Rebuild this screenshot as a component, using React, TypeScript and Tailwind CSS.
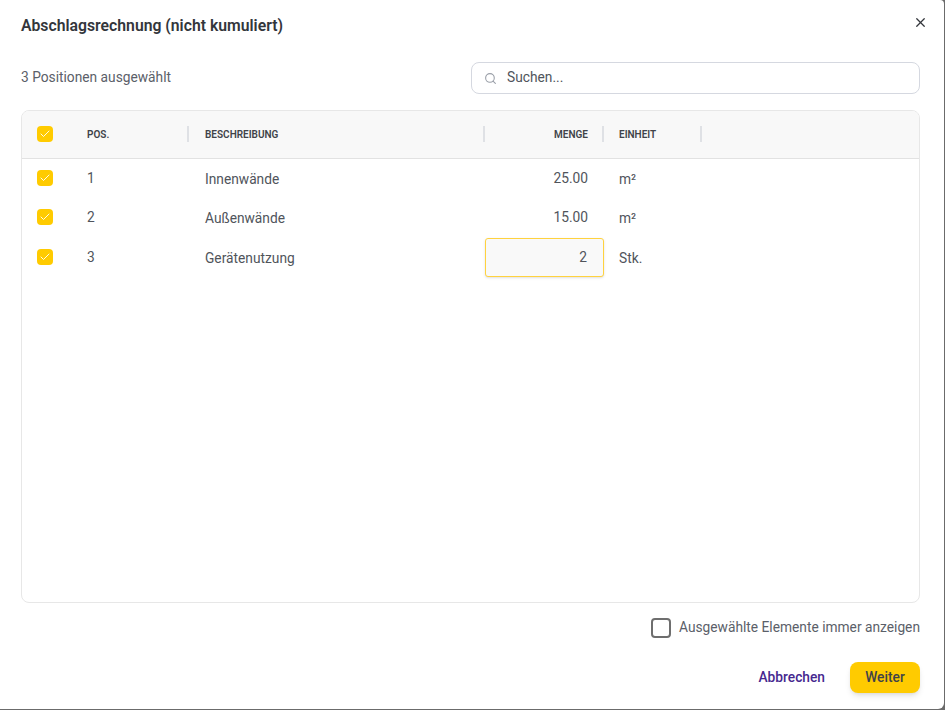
import React from 'react';
import { Check, Search, X } from 'lucide-react';

const CheckBox: React.FC = () => (
    <div className="w-4 h-4 rounded-[4px] bg-[#ffcb00] flex items-center justify-center">
        <Check size={12} strokeWidth={2} className="text-white/90" />
    </div>
);

const HeaderCell: React.FC<{ label: string; className: string; right?: boolean }> = ({ label, className, right }) => (
    <div className={`relative h-full flex items-center px-4 text-[10px] font-semibold text-[#3f4349] ${right ? 'justify-end' : ''} ${className}`}>
        {label}
        <div className="absolute right-0 top-[15px] w-0.5 h-4 bg-[#dfe1e5]" />
    </div>
);

const rows = [
    { pos: '1', name: 'Innenwände', qty: '25.00', unit: 'm²' },
    { pos: '2', name: 'Außenwände', qty: '15.00', unit: 'm²' },
    { pos: '3', name: 'Gerätenutzung', qty: '2', unit: 'Stk.', editing: true },
];

export default function App() {
    return (
        <div className="w-[945px] h-[710px] bg-[#6b6b6b] font-['Roboto',sans-serif]">
            <div className="w-[944px] h-[709px] bg-white rounded-br-md rounded-tr-[4px] flex flex-col pl-[21px] pr-6">
                <div className="flex items-start justify-between h-[54px]">
                    <h1 className="text-[15.75px] font-semibold leading-5 mt-4 text-[#33363b]">Abschlagsrechnung (nicht kumuliert)</h1>
                    <X size={15} strokeWidth={2} className="text-[#33363b] mt-[15px] mr-[-8px]" />
                </div>

                <div className="flex items-center justify-between mt-2 h-8">
                    <span className="text-[13.75px] mb-0.5 text-[#5b6069]">3 Positionen ausgewählt</span>
                    <div className="w-[449px] h-8 rounded-lg border border-[#d5d8e0] flex items-center pl-3 gap-2.5">
                        <Search size={13} strokeWidth={2} className="text-[#9a9fa8]" />
                        <span className="text-[13.75px] mb-0.5 text-[#50545b]">Suchen...</span>
                    </div>
                </div>

                <div className="mt-4 w-[899px] h-[493px] rounded-lg border border-[#e7e7e7] overflow-hidden flex flex-col">
                    <div className="h-12 shrink-0 flex items-center bg-[#f8f8f8] border-b border-[#e2e2e2]">
                        <div className="w-[49px] h-full flex items-center pl-[15px] pb-0.5">
                            <CheckBox />
                        </div>
                        <HeaderCell label="POS." className="w-[118px]" />
                        <HeaderCell label="BESCHREIBUNG" className="w-[296px]" />
                        <HeaderCell label="MENGE" className="w-[119px]" right />
                        <HeaderCell label="EINHEIT" className="w-[98px] pl-[15px]" />
                    </div>
                    {rows.map((r) => (
                        <div key={r.pos} className="h-[39.5px] shrink-0 flex items-center text-[13.75px] text-[#50545b]">
                            <div className="w-[49px] flex items-center pl-[15px] pb-0.5">
                                <CheckBox />
                            </div>
                            <div className="w-[118px] px-4 pb-px">{r.pos}</div>
                            <div className="w-[296px] px-4 pt-px">{r.name}</div>
                            {r.editing ? (
                                <div className="w-[119px] h-[39px] rounded-[3px] border-[1.5px] border-[#ffd23f] bg-[#f9f9f9] shadow-sm flex items-center justify-end px-4 pb-px">
                                    {r.qty}
                                </div>
                            ) : (
                                <div className="w-[119px] px-4 pb-px text-right">{r.qty}</div>
                            )}
                            <div className="w-[98px] pl-[15px] pt-px">{r.unit}</div>
                        </div>
                    ))}
                </div>

                <div className="flex items-center justify-end gap-2 mt-[15px] h-5">
                    <div className="w-5 h-5 rounded-[4px] border-2 border-[#6e6e6e]" />
                    <span className="text-[13.75px] mb-0.5 text-[#5b6069]">Ausgewählte Elemente immer anzeigen</span>
                </div>

                <div className="flex items-center justify-end gap-[25px] mt-[24px]">
                    <span className="text-[13.75px] font-medium text-[#46288f]">Abbrechen</span>
                    <div className="w-[70px] h-[31px] rounded-lg bg-[#ffcb00] shadow-md flex items-center justify-center text-[13.75px] font-medium text-[#3f4349]">
                        Weiter
                    </div>
                </div>
            </div>
        </div>
    );
}
